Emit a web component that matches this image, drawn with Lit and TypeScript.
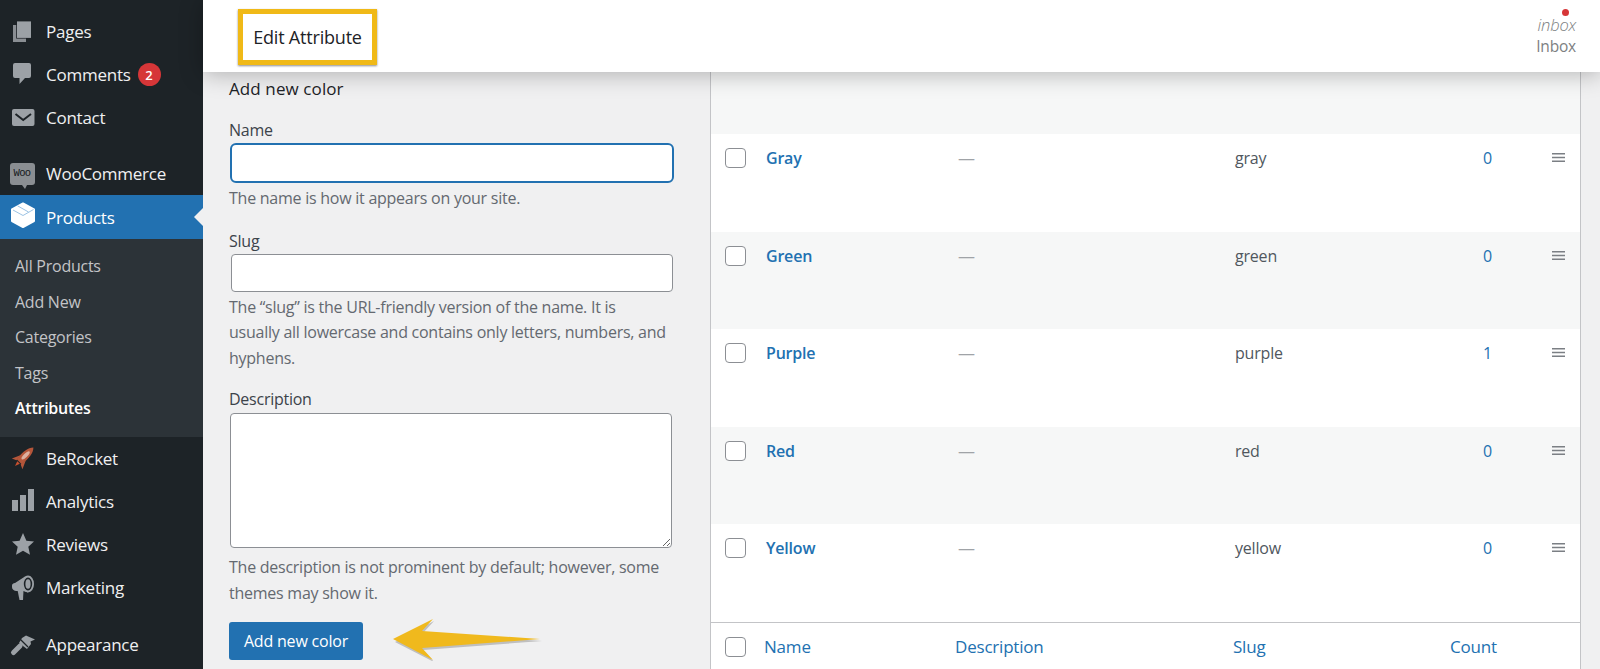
import { LitElement, html, css, svg } from "lit";
import { customElement } from "lit/decorators.js";

const G = "#9ca1a6";
const D = "#1d2327";
const ICONS: Record<string, any> = {
  pages: svg`<path d="M3 5h13v17H3z" fill="#8a8e93"/><path d="M6.200 .6h15v18h-15z" fill="${D}"/><path d="M7 1.400h14v16.500H7z" fill="${G}"/>`,
  comments: svg`<path d="M5 0h14a2 2 0 0 1 2 2v11a2 2 0 0 1-2 2h-4l-5.500 6v-6H5a2 2 0 0 1-2-2V2a2 2 0 0 1 2-2z" fill="${G}"/>`,
  contact: svg`<rect x="2" y="3" width="22.500" height="17" rx="2" fill="${G}"/><path d="M5.500 8 13.200 14 21 8" fill="none" stroke="${D}" stroke-width="2"/>`,
  box: svg`<path d="M13-1.500 24 4.500V16L13 22 2 16V4.500z" fill="#fff" stroke="#fff" stroke-width="2" stroke-linejoin="round"/><path d="M3 5 13 10.500 23.500 4.500M7.500 .8 18.500 7" fill="none" stroke="#9cc3e4" stroke-width="1"/>`,
  rocket: svg`<g transform="translate(13.500 10.500) rotate(45)"><path d="M0-14C4-10 4.500-4 3.500 6h-7C-4.500-4-4-10 0-14z" fill="#b5563a"/><path d="M-3.500 0-7.500 9-3 7zM3.500 0 7.500 9 3 7z" fill="#b5563a"/><path d="M-1.800 7h3.600L0 12z" fill="#c9502e"/><ellipse cx="0" cy="-3" rx="1.800" ry="5.500" fill="#dcb0a0"/></g>`,
  analytics: svg`<path d="M2 10h6v11H2zM10 5h6v16h-6zM18-1h6v22h-6z" fill="${G}"/>`,
  star: svg`<path d="M13 0l3.400 7.700 7.600.8-5.700 5.200 1.700 8L13 17.700 6 21.700l1.700-8L2 8.500l7.600-.8z" fill="${G}"/>`,
  megaphone: svg`<path d="M2 9.500Q2 7.500 5 7L15 0.500 18 16.500 13 15H6Q2 14 2 11z" fill="${G}"/><path d="M7.500 14h6L13 24H9.500z" fill="${G}"/><ellipse cx="18" cy="8" rx="6" ry="8.500" fill="${G}"/><ellipse cx="18" cy="8" rx="4.200" ry="6.500" fill="${D}"/><ellipse cx="18" cy="8" rx="2.600" ry="4.800" fill="${G}"/>`,
  brush: svg`<path d="M3.500 19.500 10 13" stroke="${G}" stroke-width="5" stroke-linecap="round"/><path d="M9 10 12 5 16 2.500 25 6.500 20.500 8.500 21 11 17 16z" fill="${G}"/><path d="M10.500 6.500 18 14" stroke="${D}" stroke-width="1.200"/>`,
};

type Row = { name: string; slug: string; count: string; alt: boolean };
const ROWS: Row[] = [
  { name: "Gray", slug: "gray", count: "0", alt: false },
  { name: "Green", slug: "green", count: "0", alt: true },
  { name: "Purple", slug: "purple", count: "1", alt: false },
  { name: "Red", slug: "red", count: "0", alt: true },
  { name: "Yellow", slug: "yellow", count: "0", alt: false },
];

@customElement("app-root")
export class AppRoot extends LitElement {
  static styles = css`
    :host {
      display: grid;
      grid-template-columns: 203px 1fr;
      height: 669px;
      overflow: hidden;
      background: #f0f0f1;
      font-family: "Open Sans", "Noto Sans", sans-serif;
      color: #3c434a;
    }
    .side {
      background: #1d2327;
      padding-top: 10px;
      color: #f0f0f1;
      overflow: hidden;
    }
    .item {
      height: 43px;
      display: flex;
      align-items: center;
      font-size: 17px;
      letter-spacing: -0.25px;
      position: relative;
    }
    .ico {
      width: 46px;
      flex: none;
      display: flex;
      justify-content: center;
      padding-right: 2px;
      box-sizing: border-box;
    }
    .ico svg { width: 24px; height: 24px; display: block; overflow: visible; }
    .gap { margin-top: 13px; }
    .gap2 { margin-top: 14px; }
    .woo {
      width: 25px;
      height: 22px;
      background: #8a8e92;
      border-radius: 3px;
      color: #14181b;
      font-size: 10.5px;
      line-height: 21px;
      text-align: center;
      letter-spacing: -0.6px;
      font-family: "Liberation Mono", monospace;
      position: relative;
    }
    .woo::after {
      content: "";
      position: absolute;
      left: 12px;
      bottom: -4px;
      border-left: 3px solid transparent;
      border-right: 2px solid transparent;
      border-top: 4px solid #8a8e92;
    }
    .badge {
      width: 23px;
      height: 23px;
      border-radius: 50%;
      background: #d63638;
      color: #fff;
      font-size: 13px;
      font-weight: 600;
      display: flex;
      align-items: center;
      justify-content: center;
      margin-left: 7px;
      letter-spacing: 0;
    }
    .active {
      background: #2271b1;
      color: #fff;
      height: 44px;
    }
    .active::after {
      content: "";
      position: absolute;
      right: 0;
      top: 13px;
      border: 9px solid transparent;
      border-right-color: #f0f0f1;
      border-left-width: 0;
    }
    .sub {
      background: #2c3338;
      padding: 10px 0 9px 15px;
      height: 198px;
      box-sizing: border-box;
      font-size: 16px;
      letter-spacing: -0.25px;
      color: #c3c4c7;
    }
    .sub div { height: 35.6px; line-height: 35.6px; }
    .sub .cur { color: #fff; font-weight: 600; }
    .main { display: flex; flex-direction: column; min-width: 0; }
    .top {
      height: 72px;
      flex: none;
      box-sizing: border-box;
      background: #fff;
      box-shadow: 0 2px 22px rgba(0, 0, 0, 0.28);
      position: relative;
      z-index: 2;
      display: flex;
      align-items: flex-start;
      justify-content: space-between;
      padding: 9px 24px 0 35px;
    }
    .tab {
      width: 139px;
      height: 56px;
      box-sizing: border-box;
      border: 5px solid #f0b917;
      box-shadow: 0 1px 2px rgba(0, 0, 0, 0.45);
      font-size: 18px;
      letter-spacing: -0.2px;
      color: #1d2327;
      display: flex;
      align-items: center;
      justify-content: center;
      background: #fff;
    }
    .inbox {
      position: relative;
      text-align: right;
      color: #7d7f82;
      font-size: 15.5px;
      letter-spacing: -0.2px;
      padding-top: 5px;
    }
    .inbox i { display: block; line-height: 21px; font-weight: 300; font-size: 16.5px; }
    .inbox span { display: block; line-height: 23px; }
    .inbox::before {
      content: "";
      position: absolute;
      right: 7px;
      top: 0;
      width: 7px;
      height: 7px;
      border-radius: 50%;
      background: #d63638;
    }
    .body {
      flex: 1;
      display: grid;
      grid-template-columns: 507px 871px 1fr;
      min-height: 0;
    }
    .form { padding: 7px 0 0 26px; font-size: 16px; letter-spacing: -0.25px; }
    .form h2 {
      margin: 0;
      font-size: 17px;
      line-height: 20px;
      font-weight: 500;
      color: #1d2327;
      letter-spacing: 0.1px;
    }
    label { display: block; line-height: 20px; color: #3c434a; }
    .l1 { margin-top: 21px; }
    .l2 { margin-top: 19px; }
    .l3 { margin-top: 18px; }
    .inp {
      display: block;
      box-sizing: border-box;
      background: #fff;
      border: 1px solid #8c8f94;
      border-radius: 4px;
      padding: 0;
    }
    .focus {
      margin-top: 3px;
      width: 444px;
      height: 40px;
      border: 2px solid #2271b1;
      border-radius: 6px;
      margin-left: 1px;
    }
    .slug { margin: 3px 0 0 2px; width: 442px; height: 38px; }
    .ta { margin: 4px 0 0 1px; width: 442px; height: 135px; resize: both; }
    p { margin: 0; color: #646970; line-height: 25.5px; width: 438px; }
    .h1 { margin-top: 3px; }
    .h2 { margin-top: 3px; }
    .h3 { margin-top: 7px; }
    .submit {
      display: block;
      margin-top: 16px;
      width: 134px;
      height: 38px;
      background: #2271b1;
      color: #fff;
      border: 0;
      border-radius: 3px;
      font: inherit;
      font-size: 16px;
      letter-spacing: -0.2px;
      padding: 0;
    }
    .submit-row { display: flex; align-items: center; gap: 30px; position: relative; }
    .arrow { position: absolute; left: 164px; top: 11px; width: 150px; height: 44px; }
    .table {
      border-left: 1px solid #c3c4c7;
      border-right: 1px solid #c3c4c7;
      background: #f6f7f7;
      padding-top: 62px;
      box-sizing: border-box;
      min-width: 0;
    }
    .row, .foot {
      display: grid;
      height: 97.6px;
      box-sizing: border-box;
      padding-top: 14px;
      background: #fff;
      font-size: 16px;
      letter-spacing: -0.2px;
      line-height: 20px;
      color: #50575e;
    }
    .row { grid-template-columns: 55px 192px 277px 248px 69px 1fr; }
    .row.alt { background: #f6f7f7; }
    .foot {
      grid-template-columns: 53px 191px 278px 217px 1fr;
      border-top: 1px solid #c3c4c7;
      height: 47px;
      color: #2271b1;
      font-size: 17px;
    }
    .cb {
      width: 21px;
      height: 20px;
      margin-left: 14px;
      box-sizing: border-box;
      background: #fff;
      border: 1px solid #8c8f94;
      border-radius: 4px;
    }
    .name { color: #2271b1; font-weight: 600; }
    .dash { color: #a0a3a7; font-size: 17px; }
    .cnt { color: #2271b1; }
    .drag { width: 13px; height: 9px; margin-top: 5px; display: block; }
  `;

  private menu(icon: string, label: string, cls = "") {
    return html`<div class="item ${cls}">
      <span class="ico"><svg viewBox="0 0 24 24">${ICONS[icon]}</svg></span>${label}
    </div>`;
  }

  render() {
    return html`
      <nav class="side">
        ${this.menu("pages", "Pages")}
        <div class="item">
          <span class="ico"><svg viewBox="0 0 24 24">${ICONS.comments}</svg></span>Comments<span class="badge">2</span>
        </div>
        ${this.menu("contact", "Contact")}
        <div class="item gap"><span class="ico"><span class="woo">Woo</span></span>WooCommerce</div>
        ${this.menu("box", "Products", "active")}
        <div class="sub">
          <div>All Products</div>
          <div>Add New</div>
          <div>Categories</div>
          <div>Tags</div>
          <div class="cur">Attributes</div>
        </div>
        ${this.menu("rocket", "BeRocket")}
        ${this.menu("analytics", "Analytics")}
        ${this.menu("star", "Reviews")}
        ${this.menu("megaphone", "Marketing")}
        ${this.menu("brush", "Appearance", "gap2")}
      </nav>
      <div class="main">
        <header class="top">
          <div class="tab">Edit Attribute</div>
          <div class="inbox"><i>inbox</i><span>Inbox</span></div>
        </header>
        <div class="body">
          <section class="form">
            <h2>Add new color</h2>
            <label class="l1">Name</label>
            <div class="inp focus"></div>
            <p class="h1">The name is how it appears on your site.</p>
            <label class="l2">Slug</label>
            <div class="inp slug"></div>
            <p class="h2">The “slug” is the URL-friendly version of the name. It is usually all lowercase and contains only letters, numbers, and hyphens.</p>
            <label class="l3">Description</label>
            <textarea class="inp ta"></textarea>
            <p class="h3">The description is not prominent by default; however, some themes may show it.</p>
            <div class="submit-row">
              <button class="submit">Add new color</button>
              <svg class="arrow" viewBox="0 0 150 44">
                <path d="M40 3 29 15 148 23 29 32 40 44 1 24z" fill="#8d8d8d" opacity=".5" transform="translate(1 1)"/>
                <path d="M40 2 29 14 147 22 29 31 40 43 0 22z" fill="#f0b91d"/>
              </svg>
            </div>
          </section>
          <section class="table">
            ${ROWS.map(
              (r) => html`<div class="row ${r.alt ? "alt" : ""}">
                <span class="cb"></span>
                <span class="name">${r.name}</span>
                <span class="dash">—</span>
                <span>${r.slug}</span>
                <span class="cnt">${r.count}</span>
                <svg class="drag" viewBox="0 0 13 9"><path d="M0 0h13v1.600H0zM0 3.700h13v1.600H0zM0 7.400h13V9H0z" fill="#7b7f84"/></svg>
              </div>`
            )}
            <div class="foot">
              <span class="cb"></span>
              <span>Name</span>
              <span>Description</span>
              <span>Slug</span>
              <span>Count</span>
            </div>
          </section>
          <div></div>
        </div>
      </div>
    `;
  }
}
